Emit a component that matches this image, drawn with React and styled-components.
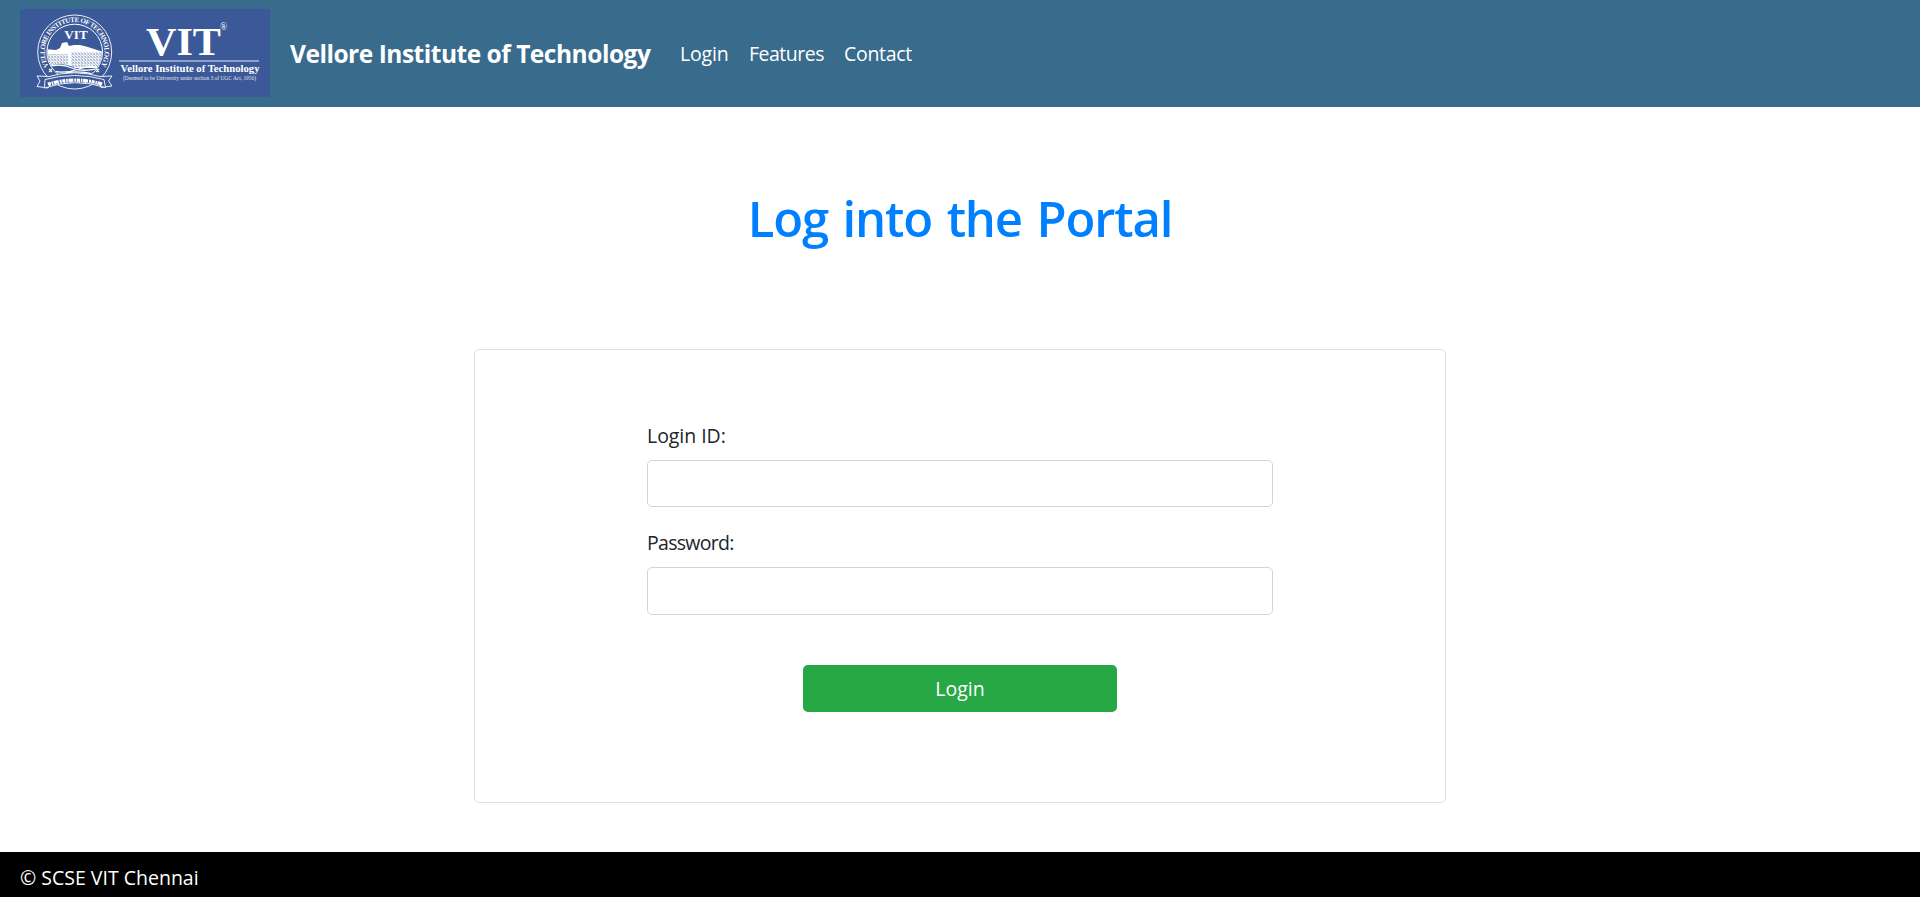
import React from "react";
import styled, { createGlobalStyle } from "styled-components";

const GlobalStyle = createGlobalStyle`
  *, *::before, *::after { box-sizing: border-box; }
  html, body, #root { height: 100%; }
  body {
    margin: 0;
    overflow: hidden;
    background: #fff;
    color: #212529;
    font-family: "Segoe UI", "Open Sans", "Noto Sans", sans-serif;
    font-size: 19.5px;
    line-height: 30px;
  }
`;

const Page = styled.div`
  display: flex;
  flex-direction: column;
  height: 897px;
`;

const Navbar = styled.header`
  display: flex;
  align-items: center;
  flex: none;
  height: 107px;
  padding: 0 20px 1px;
  background: #396b8c;
  color: #fff;
`;

const Logo = styled.svg`
  display: block;
  flex: none;
  width: 250px;
  height: 88px;
`;

const Brand = styled.a`
  width: 370px;
  margin-left: 20px;
  padding-top: 2px;
  font-size: 24.5px;
  font-weight: 700;
  letter-spacing: -0.48px;
  white-space: nowrap;
`;

const NavLinks = styled.nav`
  display: flex;
  padding-top: 2px;
`;

const NavLink = styled.a`
  width: ${(p) => p.$width}px;
  padding-left: 20px;
  letter-spacing: ${(p) => p.$tracking}px;
  white-space: nowrap;
`;

const Main = styled.main`
  display: flex;
  flex-direction: column;
  align-items: center;
  flex: 1;
`;

const Title = styled.h1`
  margin: 81px 0 100px;
  color: #0080ff;
  font-size: 49px;
  font-weight: 600;
  letter-spacing: -1.15px;
  word-spacing: 3px;
  line-height: 60px;
  white-space: nowrap;
`;

const Card = styled.section`
  display: flex;
  justify-content: center;
  width: 972px;
  height: 454px;
  margin-top: 1px;
  padding-top: 71px;
  border: 1px solid #dfdfdf;
  border-radius: 5px;
`;

const Form = styled.form`
  display: flex;
  flex-direction: column;
  width: 626px;
`;

const Field = styled.div`
  display: flex;
  flex-direction: column;
  gap: 10px;
  height: 87px;
  margin-bottom: 20px;
`;

const Label = styled.label`
  height: 29px;
  letter-spacing: ${(p) => p.$tracking}px;
`;

const Input = styled.input`
  width: 100%;
  height: ${(p) => p.$height}px;
  flex: none;
  padding: 8px 15px;
  border: 1px solid #ced4da;
  border-radius: 5px;
  background: #fff;
  font: inherit;
  outline: none;
`;

const SubmitButton = styled.button`
  align-self: center;
  width: 314px;
  height: 47px;
  margin-top: 30px;
  padding: 0;
  border: 0;
  border-radius: 5px;
  background: #28a745;
  color: #fff;
  font: inherit;
`;

const Footer = styled.footer`
  flex: none;
  height: 45px;
  padding: 11px 20px 0;
  background: #000;
  color: #fff;
`;

const serif = '"Liberation Serif", serif';

function VitLogo() {
  return (
    <Logo viewBox="0 0 250 88" role="img" aria-label="VIT">
      <defs>
        <path id="sealArc" d="M29.2 58.2 A29.8 29.8 0 1 1 80.2 58.2" />
        <clipPath id="sealInner"><circle cx="54.7" cy="43" r="27.2" /></clipPath>
        <pattern id="hatch" width="3" height="3" patternUnits="userSpaceOnUse">
          <path d="M0 1H2M1 2.5H3M2.5 0V1" stroke="#3b5998" strokeWidth=".4" />
        </pattern>
      </defs>
      <rect width="250" height="88" fill="#3b5998" />
      <g fill="none" stroke="#fff">
        <circle cx="54.7" cy="43" r="37" strokeWidth=".9" />
        <circle cx="54.7" cy="43" r="27.8" strokeWidth="1" />
      </g>
      <g clipPath="url(#sealInner)">
        <path d="M25 40L36 41 40 39 42 34 47 33 49 37 54 36 60 36 68 38 74 40 84 43V59H25Z" fill="#fff" />
        <path d="M25 45H48V58H25Z M51 43H84V58H51Z" fill="url(#hatch)" />
        <path d="M26 58Q42 52 55 59T84 56V64Q69 60 57 63T26 65Z" fill="#3b5998" />
        <path d="M27 58Q41 54 52 59T82 58M31 62Q45 65 59 60T80 60M39 67Q52 60 73 65" fill="none" stroke="#fff" strokeWidth="1.3" />
      </g>
      <text fill="#fff" fontFamily={serif} fontSize="7" fontWeight="700">
        <textPath href="#sealArc" startOffset="1" textLength="123">VELLORE INSTITUTE OF TECHNOLOGY</textPath>
      </text>
      <text x="44.3" y="29.9" textLength="23.5" lengthAdjust="spacingAndGlyphs" fill="#fff" fontFamily={serif} fontSize="13" fontWeight="700">VIT</text>
      <path d="M29 60L32 63M32 60L29 63M76 60L79 63M79 60L76 63" stroke="#fff" strokeWidth="1.2" />
      <path d="M17 67L29 67.5Q54 60 80 67.5L92 67 88.5 72 92 77 81 78.5 79 75Q54 65 30 75L28 79 17 77.5 20 72Z" fill="#3b5998" stroke="#fff" strokeWidth=".9" />
      <path d="M25 70.5Q54.7 62.5 84 70.5L85.5 78.5Q54.7 68.5 24.5 79Z" fill="#3b5998" stroke="#fff" strokeWidth=".9" />
      <path d="M28 75.5Q54.7 67.5 82 75.5" fill="none" stroke="#fff" strokeWidth="4" strokeDasharray="3 .8 1.6 .6 5 1 2 .7" />
      <path d="M28 77Q54.7 69 82 77" fill="none" stroke="#3b5998" strokeWidth=".9" strokeDasharray="1 1.6 1.4 2" />
      <g fill="#fff" fontFamily={serif}>
        <text x="126" y="45.5" textLength="75" lengthAdjust="spacingAndGlyphs" fontSize="41" fontWeight="700">VIT</text>
        <text x="200" y="21" fontSize="9.5">®</text>
        <rect x="99" y="51.5" width="140" height="1" opacity=".85" />
        <text x="100.5" y="62.5" textLength="139" lengthAdjust="spacingAndGlyphs" fontSize="9.6" fontWeight="700">Vellore Institute of Technology</text>
        <text x="103" y="71.3" textLength="133" lengthAdjust="spacingAndGlyphs" fontSize="5.3" opacity=".85">(Deemed to be University under section 3 of UGC Act, 1956)</text>
      </g>
    </Logo>
  );
}

export default function App() {
  return (
    <Page>
      <GlobalStyle />
      <Navbar>
        <VitLogo />
        <Brand>Vellore Institute of Technology</Brand>
        <NavLinks>
          <NavLink $width={69} $tracking={-0.15}>Login</NavLink>
          <NavLink $width={95} $tracking={-0.5}>Features</NavLink>
          <NavLink $width={90} $tracking={-0.3}>Contact</NavLink>
        </NavLinks>
      </Navbar>
      <Main>
        <Title>Log into the Portal</Title>
        <Card>
          <Form onSubmit={(e) => e.preventDefault()}>
            <Field>
              <Label htmlFor="login-id" $tracking={-0.05}>Login ID:</Label>
              <Input id="login-id" type="text" $height={47} />
            </Field>
            <Field>
              <Label htmlFor="password" $tracking={-0.7}>Password:</Label>
              <Input id="password" type="password" $height={48} />
            </Field>
            <SubmitButton type="submit">Login</SubmitButton>
          </Form>
        </Card>
      </Main>
      <Footer>© SCSE VIT Chennai</Footer>
    </Page>
  );
}
